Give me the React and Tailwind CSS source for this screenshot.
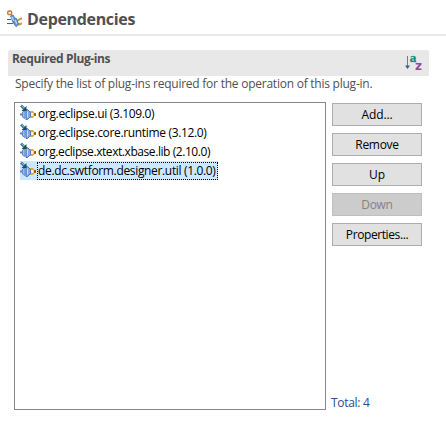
const plugins = [
  { name: 'org.eclipse.ui (3.109.0)', tracking: 'tracking-[-0.34px]' },
  { name: 'org.eclipse.core.runtime (3.12.0)', tracking: 'tracking-[-0.34px]' },
  { name: 'org.eclipse.xtext.xbase.lib (2.10.0)', tracking: 'tracking-[-0.43px]' },
  { name: 'de.dc.swtform.designer.util (1.0.0)', tracking: 'tracking-[-0.34px]', selected: true },
];

const buttons = [
  { label: 'Add...', tracking: 'tracking-[-0.16px]' },
  { label: 'Remove', tracking: 'tracking-[-0.3px]' },
  { label: 'Up', tracking: 'tracking-[-0.16px]' },
  { label: 'Down', disabled: true, tracking: 'tracking-[-0.3px]' },
  { label: 'Properties...', tracking: 'tracking-[-0.4px]' },
];

function DependenciesIcon() {
  return (
    <svg width="16" height="17" viewBox="0 0 16 17" className="shrink-0">
      <path d="M0 9.500h4M0 13.500h6" stroke="#3e6598" strokeWidth="1.200" />
      <path d="M10 10.500c2 0 2-2 5-2M11 14.500c2 0 2-1 4-1" fill="none" stroke="#c79d38" strokeWidth="2" />
      <path d="M3 6l3-1 4 8-4 1z" fill="#6f9bdd" />
      <path d="M3.500 6l2.500-1L8 8" fill="none" stroke="#4e7cc3" />
      <path d="M6 10l3-2 2.500 6-2 2.500-1.500-1z" fill="#6f9bdd" stroke="#3f6cb8" strokeWidth=".9" />
      <path d="M5 7l2 4M8.500 10l1 4" stroke="#c9defa" />
      <rect x=".7" y="1" width="4" height="3.600" rx="1.200" fill="#f8e3c8" stroke="#c27a40" strokeWidth="1.300" />
    </svg>
  );
}

function PluginIcon() {
  return (
    <svg width="17" height="19" viewBox="0 0 17 19" className="shrink-0">
      <path d="M0 10.500h3" stroke="#6284b1" strokeWidth="2" />
      <path d="M10 7h3l1.500 2h1.500v3h-1.500l-1.500 2h-3z" fill="#e2a63a" />
      <path d="M10.500 9h3v3h-3z" fill="#fff4cc" />
      <path d="M14 10.500h2" stroke="#8a5b16" strokeWidth="2.500" />
      <path d="M2.500 8l2.500-1.500v8L2.500 13z" fill="#9abdeb" stroke="#6089ca" />
      <path d="M6 5.500h1.500l3 3v4l-3 3H6z" fill="#7fa9e4" stroke="#4a76bf" />
      <path d="M7.500 7.500v6" stroke="#c9def9" />
      <path d="M1 1.500l3 3" stroke="#397890" strokeWidth="2.600" />
      <path d="M6.500 2V7H1.500z" fill="#174d66" />
      <path d="M1.500 1.500l2.500 2.500" stroke="#a0cbd5" strokeWidth=".8" />
    </svg>
  );
}

function SortIcon() {
  return (
    <svg width="18" height="22" viewBox="0 0 18 22" className="shrink-0">
      <path d="M2.500 6v11" stroke="#4b88ae" />
      <path d="M0 15.500h5L2.500 19z" fill="#32627f" />
      <text x="4.800" y="12" fontSize="13" fontWeight="700" fill="#16877b" stroke="#16877b" strokeWidth=".3" fontFamily="Liberation Serif, serif">a</text>
      <text x="10" y="20" fontSize="12" fontWeight="700" fill="#904a96" fontFamily="DejaVu Sans, sans-serif">z</text>
    </svg>
  );
}

export default function App() {
  return (
    <main className="h-[425px] w-[446px] overflow-hidden bg-white font-['Open_Sans',sans-serif] text-[12px] text-[#505050]">
      <header className="flex h-9 items-start border-b-2 border-[#e8e8e8] pl-[7px] pt-[10px]">
        <DependenciesIcon />
        <h1 className="ml-1 -mt-px text-[16px] font-bold leading-[20px] tracking-[-0.33px]">Dependencies</h1>
      </header>
      <section className="ml-2 mt-[14px] w-[421px]">
        <div className="flex h-[26px] justify-between rounded-t-[2px] bg-[#e8e8e8] pl-[4px] pr-[6px]">
          <h2 className="font-bold leading-[18px] tracking-[-0.38px]">Required Plug-ins</h2>
          <SortIcon />
        </div>
        <p className="ml-[7px] h-[26px] whitespace-nowrap leading-[16px] tracking-[-0.24px]">
          Specify the list of plug-ins required for the operation of this plug-in.
        </p>
        <div className="ml-[6px] flex">
          <ul className="h-[308px] w-[312px] border border-[#828790] pl-[5px] pt-px text-black">
            {plugins.map((p) => (
              <li key={p.name} className={`flex h-[19px] w-fit items-center ${p.selected ? 'bg-[#cce8ff]' : ''}`}>
                <PluginIcon />
                <span className={`flex h-[18px] items-center whitespace-nowrap border border-dotted pr-px ${p.tracking} ${p.selected ? 'border-black' : 'border-transparent'}`}>
                  {p.name}
                </span>
              </li>
            ))}
          </ul>
          <div className="ml-[6px] flex w-[90px] flex-col pt-px">
            <div className="flex flex-col gap-[7px]">
              {buttons.map((b) => (
                <button
                  key={b.label}
                  disabled={b.disabled}
                  className={`flex h-[23px] items-center justify-center border ${b.tracking} ${b.disabled ? 'border-[#bfbfbf] bg-[#cccccc] text-[#838383]' : 'border-[#adadad] bg-[#e1e1e1] text-black'}`}
                >
                  {b.label}
                </button>
              ))}
            </div>
            <p className="mt-auto -ml-px leading-[14px] tracking-[-0.3px] text-[#24508a]">Total: 4</p>
          </div>
        </div>
      </section>
    </main>
  );
}
